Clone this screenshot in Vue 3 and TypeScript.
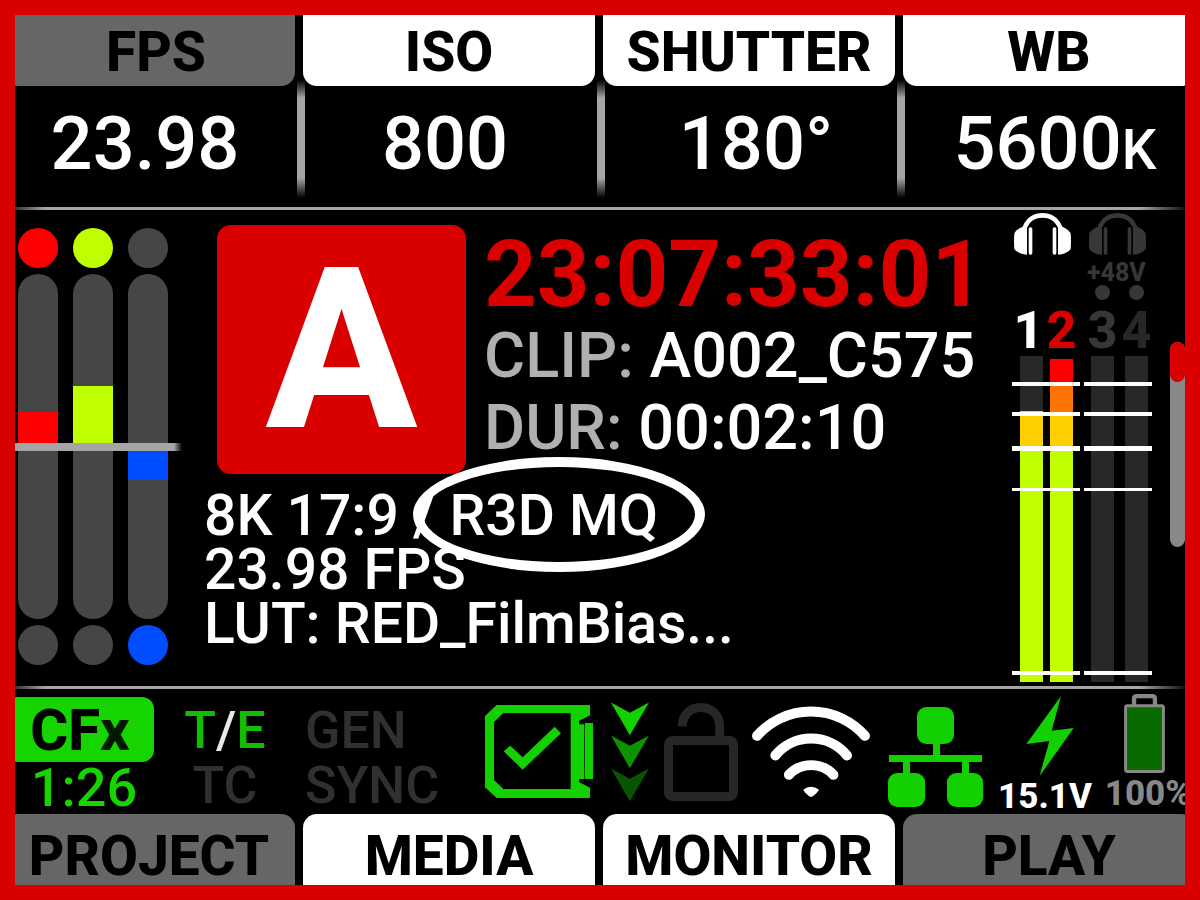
<script setup lang="ts">
interface Tab { label: string; dim: boolean; inset?: boolean }
interface Reading { value: string; unit?: string; side: 'left' | 'right' }
interface Meter { id: string; top: string; bottom: string; up: number; down: number }
interface Segment { color: string; size: number }
interface Channel { no: number; color: string; segments: Segment[] }
interface ChannelPair { id: string; active: boolean; channels: Channel[] }

const topTabs: Tab[] = [
  { label: 'FPS', dim: true, inset: true },
  { label: 'ISO', dim: false },
  { label: 'SHUTTER', dim: false },
  { label: 'WB', dim: false },
]
const bottomTabs: Tab[] = [
  { label: 'PROJECT', dim: true },
  { label: 'MEDIA', dim: false },
  { label: 'MONITOR', dim: false },
  { label: 'PLAY', dim: true },
]
const readings: Reading[] = [
  { value: '23.98', side: 'left' },
  { value: '800', side: 'left' },
  { value: '180°', side: 'right' },
  { value: '5600', unit: 'K', side: 'right' },
]

const grey = '#464646'
const meters: Meter[] = [
  { id: 'red', top: '#ff0000', bottom: grey, up: 20, down: 0 },
  { id: 'green', top: '#c0ff00', bottom: grey, up: 35, down: 0 },
  { id: 'blue', top: grey, bottom: '#004dff', up: 0, down: 19 },
]

const off = '#282828'
const pairs: ChannelPair[] = [
  {
    id: 'a',
    active: true,
    channels: [
      { no: 1, color: '#ffffff', segments: [{ color: off, size: 55 }, { color: '#ffcf00', size: 38 }, { color: '#c0ff00', size: 233 }] },
      {
        no: 2,
        color: '#da0000',
        segments: [
          { color: 'transparent', size: 3 },
          { color: '#ff0000', size: 25 },
          { color: '#ff7300', size: 30 },
          { color: '#ffcf00', size: 35 },
          { color: '#c0ff00', size: 233 },
        ],
      },
    ],
  },
  {
    id: 'b',
    active: false,
    channels: [
      { no: 3, color: '#373737', segments: [{ color: off, size: 326 }] },
      { no: 4, color: '#272727', segments: [{ color: off, size: 326 }] },
    ],
  },
]
const ticks = [
  { at: 8, size: 4 },
  { at: 17.2, size: 4 },
  { at: 27.6, size: 5 },
  { at: 40.5, size: 3 },
  { at: 96.6, size: 4 },
]
</script>

<template>
  <main class="screen">
    <nav class="tabs top" aria-label="Exposure settings">
      <button v-for="t in topTabs" :key="t.label" type="button" class="tab" :class="{ dim: t.dim, inset: t.inset }">{{ t.label }}</button>
    </nav>

    <section class="readings">
      <template v-for="(r, i) in readings" :key="r.value">
        <span v-if="i > 0" class="divider"></span>
        <span class="reading" :class="r.side">{{ r.value }}<small v-if="r.unit">{{ r.unit }}</small></span>
      </template>
    </section>

    <div class="rule"></div>

    <section class="body">
      <div class="meters">
        <div v-for="m in meters" :key="m.id" class="meter">
          <span class="lamp" :style="{ background: m.top }"></span>
          <span class="pill">
            <span class="half upper"><span :style="{ height: m.up + '%', background: m.top }"></span></span>
            <span class="half"><span :style="{ height: m.down + '%', background: m.bottom }"></span></span>
          </span>
          <span class="lamp" :style="{ background: m.bottom }"></span>
        </div>
        <span class="midline"></span>
      </div>

      <div class="info">
        <div class="headline">
          <div class="camera">A</div>
          <div class="clip">
            <div class="timecode">23:07:33:01</div>
            <div class="line"><span class="key">CLIP:</span> A002_C575</div>
            <div class="line"><span class="key">DUR:</span> 00:02:10</div>
          </div>
        </div>
        <div class="details">
          <div>8K 17:9 / <span class="codec">R3D MQ</span></div>
          <div>23.98 FPS</div>
          <div>LUT: RED_FilmBias...</div>
        </div>
      </div>

      <div class="audio">
        <div v-for="p in pairs" :key="p.id" class="pair" :class="{ idle: !p.active }">
          <svg class="phones" viewBox="0 0 171 126" aria-hidden="true">
            <path d="M39 125C24 125 8 118 1 108Q-1 82 1 62C6 50 16 46 26 41C38 12 60 0 85.500 0S133 12 145 41C155 46 165 50 170 62Q172 82 170 108C163 118 147 125 132 125V44C121 22 106 14 85.500 14S50 22 39 44Z" />
            <rect x="44" y="43" width="11" height="82" rx="5" />
            <rect x="116" y="43" width="11" height="82" rx="5" />
          </svg>
          <div class="phantom">
            <template v-if="!p.active">
              <span class="volts">+48V</span>
              <span class="dots"><i></i><i></i></span>
            </template>
          </div>
          <div class="cells numbers">
            <span v-for="c in p.channels" :key="c.no" :style="{ color: c.color }">{{ c.no }}</span>
          </div>
          <div class="cells bars">
            <span v-for="c in p.channels" :key="c.no" class="bar">
              <span v-for="(s, i) in c.segments" :key="i" :style="{ flexGrow: s.size, background: s.color }"></span>
            </span>
            <span v-for="t in ticks" :key="t.at" class="tick" :style="{ top: t.at + '%', height: t.size + 'px' }"></span>
          </div>
        </div>
      </div>

      <div class="scroll"><span class="thumb"></span></div>
    </section>

    <div class="rule"></div>

    <section class="status">
      <div class="card">
        <span class="badge">CF<span class="dark">x</span></span>
        <span class="remaining">1:26</span>
      </div>
      <div class="stack centred">
        <span class="te">T<b>/</b>E</span>
        <span>TC</span>
      </div>
      <div class="stack">
        <span>GEN</span>
        <span>SYNC</span>
      </div>
      <div class="icon raised">
        <svg width="108" height="93" viewBox="45 63 324 279" fill="#13d100" role="img" aria-label="Media ready">
          <path fill-rule="evenodd" d="M80 63H360V94L327 111V121H343V285H327V294L360 311V342H80L45 310V96ZM100 87H302V315H100L72 288V114Z" />
          <rect x="345" y="117" width="24" height="168" />
          <path d="M101 202L121 185L158 220L254 128L273 148L158 257Z" />
        </svg>
      </div>
      <div class="icon raised">
        <svg width="38" height="100" viewBox="422 49 115 300" role="img" aria-label="Offload">
          <path fill="#13d100" d="M422 49L479 80L537 49L479 148Z" />
          <path fill="#0d9200" d="M422 149L479 180L537 149L479 248Z" />
          <path fill="#085400" d="M422 249L479 280L537 249L479 348Z" />
        </svg>
      </div>
      <div class="icon raised">
        <svg width="74" height="98" viewBox="582 48 222 294" fill="none" stroke="#272727" stroke-width="27" role="img" aria-label="Unlocked">
          <rect x="595.5" y="160.5" width="195" height="168" rx="12" />
          <path d="M636.5 118C637 82 662 61.500 692.500 61.500S749 82 749 118V160" />
        </svg>
      </div>
      <div class="icon raised">
        <svg width="118" height="91" viewBox="35 63 355 274" fill="none" stroke="#fff" stroke-width="30" stroke-linecap="round" role="img" aria-label="Wi-Fi">
          <path d="M50 153A217 217 0 0 1 375 153" />
          <path d="M105 212A140 140 0 0 1 321 212" />
          <path d="M146 270A92 92 0 0 1 280 270" />
          <path fill="#fff" stroke="none" d="M189 315Q212 297 237 315Q232 324 218 335Q212 338 207 335Q194 325 189 315Z" />
        </svg>
      </div>
      <div class="icon lowered">
        <svg width="95" height="100" viewBox="444 63 285 300" fill="#13d100" role="img" aria-label="Network">
          <rect x="531" y="63" width="111" height="111" rx="28" />
          <rect x="444" y="261" width="111" height="102" rx="28" />
          <rect x="621" y="261" width="108" height="102" rx="28" />
          <path d="M579 170H600V207H726V228H687V265H666V228H510V265H489V228H447V207H579Z" />
        </svg>
      </div>
      <div class="power">
        <svg class="bolt" width="48" height="80" viewBox="140 33 142 240" fill="#13d100" aria-hidden="true">
          <path d="M244 33L140 177L209 168L180 273L282 129L216 137Z" />
        </svg>
        <span>15.1V</span>
      </div>
      <div class="power battery">
        <svg class="cell" width="41" height="79" viewBox="432 26 123 238" aria-hidden="true">
          <path d="M462 60V40Q462 32.500 470 32.500H517Q525 32.500 525 40V60" fill="none" stroke="#888" stroke-width="13" />
          <rect x="436.500" y="61.500" width="114" height="198" rx="6" fill="#086b00" stroke="#888" stroke-width="9" />
        </svg>
        <span>100%</span>
      </div>
    </section>

    <nav class="tabs bottom" aria-label="Pages">
      <button v-for="t in bottomTabs" :key="t.label" type="button" class="tab" :class="{ dim: t.dim }">{{ t.label }}</button>
    </nav>
  </main>
</template>

<style>
body {
  margin: 0;
  background: #000;
}
</style>

<style scoped>
.screen {
  box-sizing: border-box;
  min-height: 100vh;
  display: flex;
  flex-direction: column;
  border: 15px solid #da0000;
  background: #000;
  color: #fff;
  font-family: Roboto, "Liberation Sans", sans-serif;
  font-weight: 500;
  overflow: hidden;
  white-space: nowrap;
}
.tabs {
  position: relative;
  z-index: 1;
  display: grid;
  grid-template-columns: repeat(4, minmax(0, 1fr));
  gap: 8px;
  margin: 0 -10px 0 -12px;
}
.tab {
  height: 71px;
  padding: 4px 0 0;
  border: 0;
  background: #fff;
  color: #000;
  font: 800 55px/67px Roboto, "Liberation Sans", sans-serif;
  cursor: pointer;
}
.tab.dim {
  background: #666;
}
.tab.inset {
  padding-left: 14px;
}
.top .tab {
  border-radius: 0 0 14px 14px;
}
.bottom .tab {
  padding-top: 14px;
  line-height: 57px;
  border-radius: 14px 14px 0 0;
}

.readings {
  display: grid;
  grid-template-columns: minmax(0, 292fr) 8px minmax(0, 292fr) 8px minmax(0, 292fr) 8px minmax(0, 290fr);
  height: 127px;
  margin: -6px -10px 0;
}
.divider {
  height: 118px;
  background: linear-gradient(transparent, #a5a5a5 18px, #a5a5a5 98px, transparent);
}
.reading {
  padding-top: 5px;
  font-size: 74px;
  line-height: 118px;
  text-align: center;
}
.reading.left {
  padding-right: 12px;
}
.reading.right {
  padding-left: 10px;
}
.reading small {
  font-size: 55px;
}
.rule {
  height: 3px;
  background: linear-gradient(90deg, #333, #a5a5a5 30px, #a5a5a5 calc(100% - 45px), #111);
}

.body {
  flex: 1;
  display: flex;
  min-height: 476px;
}
.meters {
  position: relative;
  display: flex;
  gap: 15px;
  width: 164px;
  margin: 18px 0 21px;
  padding-left: 3px;
}
.meter {
  display: flex;
  flex-direction: column;
  gap: 6px;
}
.lamp {
  width: 40px;
  height: 40px;
  border-radius: 50%;
}
.pill {
  flex: 1;
  display: flex;
  flex-direction: column;
  border-radius: 20px;
  background: #464646;
}
.half {
  flex: 1;
  display: flex;
  flex-direction: column;
}
.upper {
  justify-content: flex-end;
}
.midline {
  position: absolute;
  left: 0;
  right: 0;
  top: calc(50% - 4px);
  height: 8px;
  background: linear-gradient(90deg, #a5a5a5 calc(100% - 8px), transparent);
}

.info {
  flex: 1;
  min-width: 0;
  margin: 15px 0 0 22px;
}
.headline {
  display: flex;
  gap: 18px;
  padding-left: 13px;
}
.camera {
  width: 249px;
  height: 249px;
  border-radius: 14px;
  background: #da0000;
  font-size: 224px;
  font-weight: 800;
  line-height: 252px;
  text-align: center;
}
.clip {
  padding-top: 5px;
}
.timecode {
  color: #da0000;
  font-size: 92px;
  font-weight: 700;
  line-height: 90px;
}
.line {
  font-size: 63px;
  line-height: 72px;
}
.key {
  color: #b0b0b0;
}
.details {
  margin-top: 15px;
  font-size: 57px;
  line-height: 54px;
}
.codec {
  position: relative;
}
.codec::after {
  content: "";
  position: absolute;
  inset: -25px -47px -23px -36px;
  border: 10px solid #fff;
  border-radius: 50%;
}

.audio {
  display: flex;
  gap: 4px;
  margin-right: 18px;
}
.pair {
  display: flex;
  flex-direction: column;
  width: 68px;
  padding: 3px 0 4px;
  fill: #fff;
}
.idle {
  color: #373737;
  fill: #373737;
}
.phones {
  width: 57px;
  height: 42px;
  margin-left: 2px;
}
.idle .phones {
  margin-left: 5px;
}
.phantom {
  display: flex;
  flex-direction: column;
  height: 50px;
  padding-left: 3px;
  font-size: 25px;
  font-weight: 800;
}
.volts {
  height: 30px;
  line-height: 36px;
}
.dots {
  display: flex;
  gap: 19px;
  padding-left: 8px;
}
.dots i {
  width: 15px;
  height: 15px;
  border-radius: 50%;
  background: #373737;
}
.cells {
  display: grid;
  grid-template-columns: 23px 23px;
  gap: 7px;
  padding-left: 8px;
}
.idle .cells {
  gap: 11px;
  padding-left: 7px;
}
.numbers {
  gap: 10px;
  height: 51px;
  padding-left: 5px;
  font-size: 52px;
  font-weight: 800;
  line-height: 52px;
}
.numbers span {
  display: flex;
  justify-content: center;
}
.bars {
  position: relative;
  flex: 1;
}
.bar {
  display: flex;
  flex-direction: column;
}
.tick {
  position: absolute;
  left: 0;
  right: 0;
  background: #fff;
}
.scroll {
  width: 15px;
  height: 205px;
  margin-top: 132px;
  border-radius: 8px;
  background: #888;
}
.thumb {
  display: block;
  height: 40px;
  border-radius: 8px;
  background: #da0000;
}

.status {
  display: grid;
  grid-template-columns:
    minmax(0, 150fr) minmax(0, 120fr) minmax(0, 185fr) minmax(0, 138fr) minmax(0, 44fr)
    minmax(0, 98fr) minmax(0, 122fr) minmax(0, 127fr) minmax(0, 92fr) minmax(0, 110fr);
  height: 125px;
  margin-right: -16px;
}
.card {
  display: flex;
  flex-direction: column;
  width: 148px;
  margin-left: -9px;
  padding-top: 8px;
  text-align: center;
}
.badge {
  height: 65px;
  border-radius: 12px;
  background: #15d400;
  color: #000;
  font-size: 58px;
  font-weight: 800;
  line-height: 66px;
}
.dark {
  color: #031a00;
}
.remaining {
  padding-left: 8px;
  color: #15d400;
  font-size: 54px;
  line-height: 52px;
}
.stack {
  display: flex;
  flex-direction: column;
  padding: 14px 0 0 20px;
  color: #303030;
  font-size: 52px;
  line-height: 55px;
}
.centred {
  padding-left: 0;
  align-items: center;
}
.te {
  color: #12bf00;
}
.te b {
  color: #e8e8e8;
  font-weight: 500;
}
.icon {
  display: flex;
  align-items: center;
  justify-content: center;
}
.raised {
  padding-bottom: 4px;
}
.lowered {
  padding-top: 6px;
}
.icon svg,
.power svg {
  flex: none;
}
.power {
  display: flex;
  flex-direction: column;
  align-items: center;
  padding-top: 7px;
  font-size: 35px;
  font-weight: 800;
  line-height: 42px;
}
.bolt {
  margin-left: 10px;
}
.battery {
  padding: 5px 0 0 4px;
  color: #888;
}
.cell {
  margin-right: 8px;
}
</style>
